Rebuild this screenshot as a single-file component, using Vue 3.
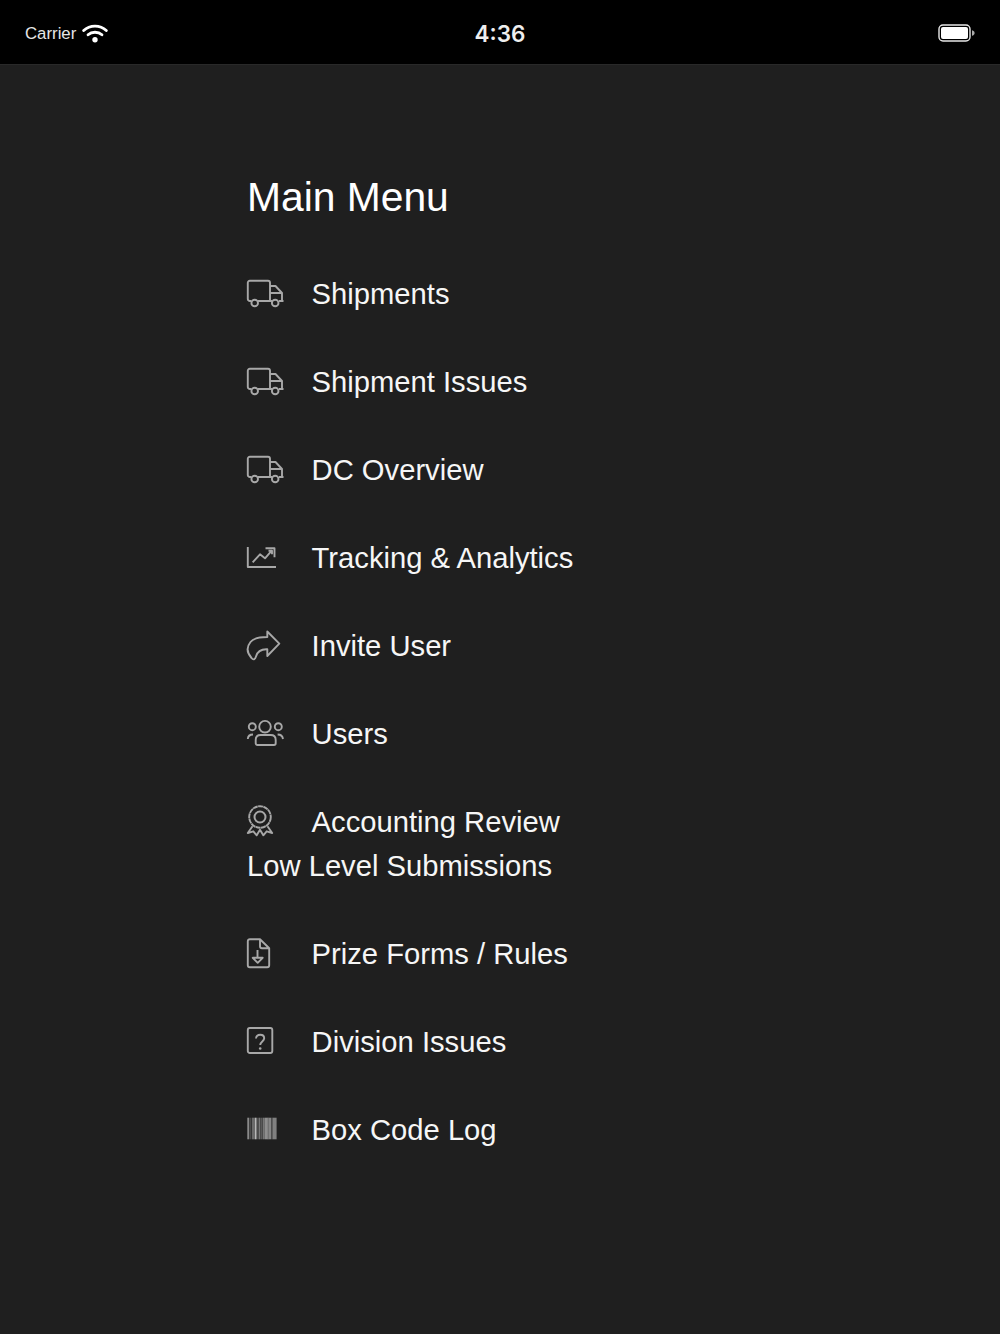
<template>
  <div class="screen">
    <header class="status-bar">
      <div class="status-left">
        <span class="carrier">Carrier</span>
        <svg class="wifi" width="26" height="20" viewBox="0 0 27 20">
          <path d="M1.8 7.400C8.200 1.400 18.800 1.400 25.200 7.400" fill="none" stroke="#fff" stroke-width="3" stroke-linecap="round" />
          <path d="M6.300 11.800C10.200 8.400 16.800 8.400 20.700 11.800" fill="none" stroke="#fff" stroke-width="3" stroke-linecap="round" />
          <circle cx="13.500" cy="17" r="2.800" fill="#fff" />
        </svg>
      </div>
      <div class="clock">4:36</div>
      <svg class="battery" width="37" height="18" viewBox="0 0 37 18">
        <rect x="1" y="1" width="31" height="16" rx="4" fill="none" stroke="#e8e8e8" stroke-width="1.400" />
        <rect x="3" y="3" width="27" height="12" rx="2" fill="#fff" />
        <path d="M34 6.200c1.600.4 2.600 1.400 2.600 2.800s-1 2.400-2.600 2.800z" fill="#aaa" />
      </svg>
    </header>

    <main class="menu">
      <h1>Main Menu</h1>
      <p v-for="item in items" :key="item.label" class="menu-item">
        <svg class="ico" width="40" height="36" viewBox="0 0 40 36">
          <g v-if="item.icon === 'truck'">
            <path d="M4.500 25H2.800A2 2 0 0 1 .8 23V6.800a2 2 0 0 1 2-2H21a2 2 0 0 1 2 2V25H11M23 10h5.500l6.500 7v8h-3M23 17h12M23 25h2M35 25h1.500" />
            <circle cx="7.700" cy="27" r="3.300" />
            <circle cx="28.200" cy="27" r="3.300" />
          </g>
          <g v-else-if="item.icon === 'chart'">
            <path d="M.8 7V27H29" />
            <path d="M5.700 22.300 13 14.300l5 4 6.500-7.500M18.500 8.300h9v9M21.500 10.800h3.500v3.500" />
          </g>
          <g v-else-if="item.icon === 'share'">
            <path d="M20.300 3.500 32.300 15.700 20.300 28V21.300C14 21 10.500 23 9 28.500 8 32 6 32 4.500 30 0 25-.5 19 3.500 14 7 9.500 13 9 20.300 9Z" />
          </g>
          <g v-else-if="item.icon === 'users'">
            <circle cx="18" cy="10.700" r="5.800" />
            <circle cx="5.300" cy="10.700" r="3.500" />
            <circle cx="31.300" cy="10.700" r="3.500" />
            <path d="M.8 23C1 20 2.700 18.500 6 18.500M36 23C35.600 20 34 18.500 30.600 18.500" />
            <path d="M10.500 29H27a1.700 1.700 0 0 0 1.700-1.700V24c0-3-2-5-5-5H13.700c-3 0-5 2-5 5v3.300a1.700 1.700 0 0 0 1.800 1.700Z" />
          </g>
          <g v-else-if="item.icon === 'award'">
            <circle cx="13" cy="13" r="10.800" stroke-dasharray="5 .4" />
            <circle cx="13" cy="13" r="5.500" stroke-width="2" />
            <path d="M5.500 22.300.8 29l5.500-1.700 3.400 4L13 25.700l3.300 5.600 3.400-4 5.500 1.700-4.700-6.700" />
          </g>
          <g v-else-if="item.icon === 'file'">
            <path d="M13 3.200H2.800a2 2 0 0 0-2 2v24a2 2 0 0 0 2 2h17.400a2 2 0 0 0 2-2V12.300ZM13 3.200v7a2 2 0 0 0 2 2h7.200" />
            <path d="M10.500 14v8M5.700 21.800h10l-5 5Z" />
          </g>
          <g v-else-if="item.icon === 'question'">
            <rect x=".8" y="4" width="24.500" height="25" rx="2" />
            <path d="M9 14.500C9.300 12 11 10.800 13.200 10.800c2.400 0 4 1.500 4 3.500 0 3-4 3.300-4 6.700" />
            <circle cx="13.200" cy="24.500" r="1.300" class="dot" />
          </g>
          <g v-else class="barcode">
            <rect v-for="bar in bars" :key="bar[0]" :x="bar[0]" y="5.700" :width="bar[1]" height="21.600" :fill="bar[2]" />
          </g>
        </svg>{{ item.label }}
      </p>
    </main>
  </div>
</template>

<script setup>
const items = [
  { icon: 'truck', label: 'Shipments' },
  { icon: 'truck', label: 'Shipment Issues' },
  { icon: 'truck', label: 'DC Overview' },
  { icon: 'chart', label: 'Tracking & Analytics' },
  { icon: 'share', label: 'Invite User' },
  { icon: 'users', label: 'Users' },
  { icon: 'award', label: 'Accounting Review Low Level Submissions' },
  { icon: 'file', label: 'Prize Forms / Rules' },
  { icon: 'question', label: 'Division Issues' },
  { icon: 'barcode', label: 'Box Code Log' }
]

// x, width, colour of each barcode stripe
const bars = [
  [0.3, 2, '#8a8a8a'], [3, 1, '#4a4a4a'], [4.7, 3.3, '#6a6a6a'], [8, 1.6, '#b8b8b8'],
  [10.2, 1, '#555'], [11.5, 2, '#777'], [14, 1, '#5a5a5a'], [15.5, 1.5, '#777'],
  [17.3, 3, '#8e8e8e'], [20.3, 1, '#a0a0a0'], [21.3, 3, '#868686'], [24.6, 1, '#666'], [25.6, 4, '#808080']
]
</script>

<style>
html, body { margin: 0; background: #1f1f1f; }
</style>

<style scoped>
.screen { width: 1000px; height: 1334px; background: #1f1f1f; color: #f6f6f6; font-family: "Liberation Sans", Arial, sans-serif; overflow: hidden; }
.status-bar { height: 64px; box-sizing: border-box; padding: 2px 25px 0; background: #000; box-shadow: 0 1px 0 #292929; display: flex; align-items: center; justify-content: space-between; position: relative; }
.status-left { display: flex; align-items: center; gap: 6px; }
.carrier { font-size: 16.800px; color: #e6e6e6; padding-top: 2px; }
.wifi { display: block; margin-top: -1px; }
.clock { position: absolute; left: 0; right: 0; text-align: center; font-family: Inter, "Liberation Sans", sans-serif; font-size: 22.500px; font-weight: 600; color: #eee; }
.battery { display: block; }
.menu { width: 340px; margin-left: 247px; padding-top: 110px; }
h1 { margin: 0 0 30px; font-size: 40.800px; font-weight: 400; line-height: 46px; color: #fff; }
.menu-item { margin: 0; padding: 22px 0; font-size: 29.200px; line-height: 44px; }
.ico { display: inline; margin-right: 24.600px; vertical-align: -8px; fill: none; stroke: #a8a8a8; stroke-width: 1.900; stroke-linejoin: round; overflow: visible; }
.ico .dot { fill: #a8a8a8; stroke: none; }
.ico .barcode { stroke: none; }
</style>
